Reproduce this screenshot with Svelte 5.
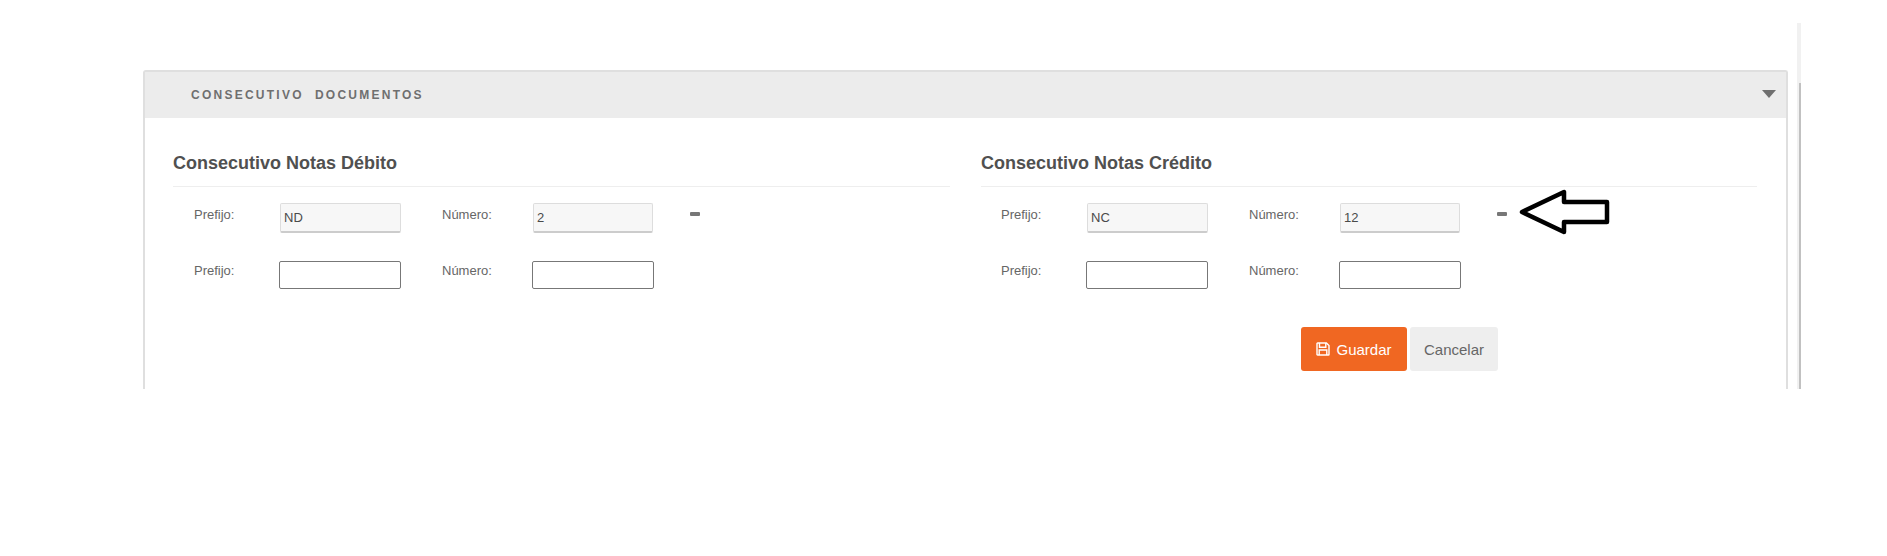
<script>
  const columns = [
    { title: 'Consecutivo Notas Débito', prefix: 'ND', number: '2' },
    { title: 'Consecutivo Notas Crédito', prefix: 'NC', number: '12', arrow: true, actions: true }
  ];
</script>

<div class="viewport">
  <section class="panel">
    <header class="panel-head">
      <h2>CONSECUTIVO&nbsp; DOCUMENTOS</h2>
      <span class="caret"></span>
    </header>
    <div class="panel-body">
      {#each columns as col}
        <div class="column">
          <h3>{col.title}</h3>
          <div class="form-row first">
            <label class="lbl">Prefijo:</label>
            <input class="locked" readonly value={col.prefix} />
            <label class="lbl num">Número:</label>
            <input class="locked second-input" readonly value={col.number} />
            <span class="dash"></span>
            {#if col.arrow}
              <svg class="arrow" width="96" height="50" viewBox="0 0 96 50">
                <path d="M4 23 L46 3 L46 13 L89 13 L89 33 L46 33 L46 43 Z" fill="#fff" stroke="#000" stroke-width="4.5" stroke-linejoin="round" />
              </svg>
            {/if}
          </div>
          <div class="form-row second">
            <label class="lbl">Prefijo:</label>
            <input class="open" />
            <label class="lbl num">Número:</label>
            <input class="open" />
          </div>
          {#if col.actions}
            <div class="actions">
              <button class="save">
                <svg width="14" height="14" viewBox="0 0 14 14" fill="none" stroke="#fff" stroke-width="1.4">
                  <path d="M1 1.6 Q1 1 1.6 1 H10.4 L13 3.6 V12.4 Q13 13 12.4 13 H1.6 Q1 13 1 12.4 Z" />
                  <path d="M3.5 1 V5.2 H9.8 V1" />
                  <path d="M3.2 13 V8 H10.8 V13" />
                </svg>
                Guardar
              </button>
              <button class="cancel">Cancelar</button>
            </div>
          {/if}
        </div>
      {/each}
    </div>
  </section>
  <div class="scrollbar"><div class="thumb"></div></div>
</div>

<style>
  :global(body) {
    background: #fff;
    font-family: "Liberation Sans", Arial, sans-serif;
  }

  .viewport {
    display: flex;
    margin: 23px 86px 0 143px;
    height: 366px;
    overflow: hidden;
  }

  .panel {
    flex: 1;
    margin: 47px 9px 0 0;
    border: 2px solid #dfdfdf;
    border-bottom: none;
    border-radius: 3px 3px 0 0;
    min-width: 0;
  }

  .panel-head {
    display: flex;
    align-items: center;
    justify-content: space-between;
    height: 46px;
    padding: 0 10px 0 46px;
    background: #ececec;
  }

  .panel-head h2 {
    margin: 0 0 1px;
    font-size: 12px;
    font-weight: 700;
    letter-spacing: 2.25px;
    color: #6f6f6f;
  }

  .caret {
    width: 0;
    height: 0;
    border-left: 7.5px solid transparent;
    border-right: 7.5px solid transparent;
    border-top: 8px solid #6f6f6f;
    margin-bottom: 2px;
  }

  .panel-body {
    display: grid;
    grid-template-columns: 777px 776px;
    gap: 31px;
    padding: 0 28px;
  }

  .column h3 {
    margin: 0;
    padding: 34px 0 11px;
    font-size: 18px;
    line-height: 23px;
    font-weight: 700;
    color: #505050;
    border-bottom: 1px solid #eee;
  }

  .form-row {
    position: relative;
    display: grid;
    grid-template-columns: 86px 121px 131px 122px auto;
    align-items: start;
    padding-left: 21px;
  }

  .column:last-child .form-row {
    padding-left: 20px;
  }

  .first {
    margin-top: 16px;
  }

  .second {
    margin-top: 28px;
  }

  .lbl {
    font-size: 13px;
    line-height: 20px;
    color: #666;
  }

  .first .lbl {
    padding-top: 2px;
  }

  .num {
    padding-left: 41px;
  }

  input {
    box-sizing: border-box;
    width: 100%;
    margin: 0;
    font-family: inherit;
    font-size: 13px;
    color: #4a4a4a;
    outline: none;
  }

  .locked {
    height: 30px;
    padding: 0 3px;
    background: #f7f7f7;
    border: 1px solid #ddd;
    border-bottom: 2px solid #ccc;
    border-radius: 2px;
  }

  .second-input {
    width: 120px;
    margin-left: 1px;
  }

  .open {
    height: 28px;
    background: #fff;
    border: 1px solid #777;
    border-radius: 2px;
  }

  .second .open:first-of-type {
    width: 122px;
    margin-left: -1px;
  }

  .dash {
    width: 10px;
    height: 4px;
    margin: 9px 0 0 36px;
    background: #777;
    border-radius: 1px;
  }

  .arrow {
    position: absolute;
    left: 537px;
    top: -14px;
  }

  .actions {
    display: flex;
    gap: 3px;
    margin-top: 38px;
    padding-left: 320px;
  }

  button {
    height: 44px;
    border: none;
    border-radius: 3px;
    font-family: inherit;
    font-size: 15px;
    padding: 0;
  }

  .save {
    display: flex;
    align-items: center;
    justify-content: center;
    gap: 6px;
    width: 106px;
    background: #f06722;
    color: #fff;
  }

  .cancel {
    width: 88px;
    background: #eee;
    color: #666;
  }

  .scrollbar {
    width: 4px;
    background: #f1f1f1;
  }

  .thumb {
    width: 2px;
    height: 306px;
    margin: 60px 0 0 2px;
    background: #c1c1c1;
  }
</style>
